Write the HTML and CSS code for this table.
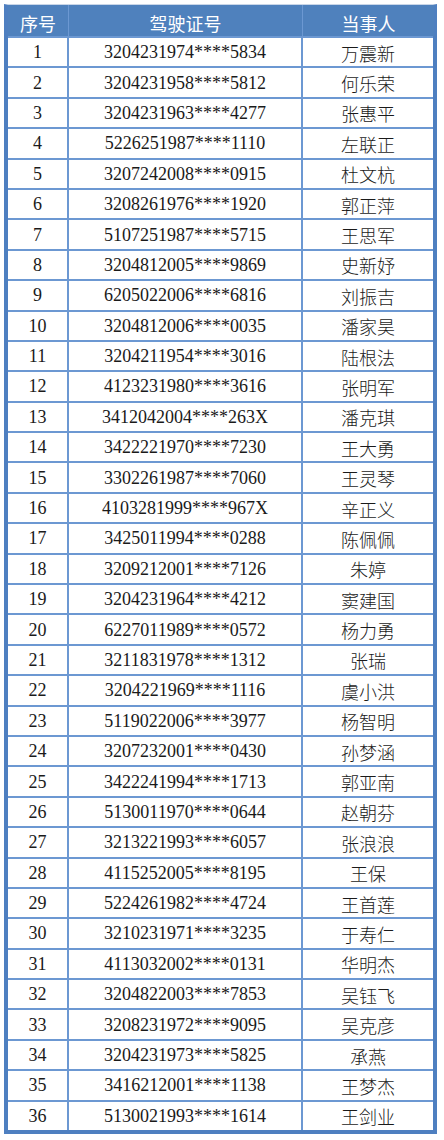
FILE: index.html
```html
<!DOCTYPE html>
<html lang="zh">
<head>
<meta charset="utf-8">
<link rel="stylesheet" href="styles.css">
</head>
<body>
<div class="frame">
<div class="grid" id="grid">
<div class="hd">序号</div><div class="hd">驾驶证号</div><div class="hd">当事人</div>
<div class="c num">1</div><div class="c num">3204231974****5834</div><div class="c name">万震新</div>
<div class="c num">2</div><div class="c num">3204231958****5812</div><div class="c name">何乐荣</div>
<div class="c num">3</div><div class="c num">3204231963****4277</div><div class="c name">张惠平</div>
<div class="c num">4</div><div class="c num">5226251987****1110</div><div class="c name">左联正</div>
<div class="c num">5</div><div class="c num">3207242008****0915</div><div class="c name">杜文杭</div>
<div class="c num">6</div><div class="c num">3208261976****1920</div><div class="c name">郭正萍</div>
<div class="c num">7</div><div class="c num">5107251987****5715</div><div class="c name">王思军</div>
<div class="c num">8</div><div class="c num">3204812005****9869</div><div class="c name">史新妤</div>
<div class="c num">9</div><div class="c num">6205022006****6816</div><div class="c name">刘振吉</div>
<div class="c num">10</div><div class="c num">3204812006****0035</div><div class="c name">潘家昊</div>
<div class="c num">11</div><div class="c num">3204211954****3016</div><div class="c name">陆根法</div>
<div class="c num">12</div><div class="c num">4123231980****3616</div><div class="c name">张明军</div>
<div class="c num">13</div><div class="c num">3412042004****263X</div><div class="c name">潘克琪</div>
<div class="c num">14</div><div class="c num">3422221970****7230</div><div class="c name">王大勇</div>
<div class="c num">15</div><div class="c num">3302261987****7060</div><div class="c name">王灵琴</div>
<div class="c num">16</div><div class="c num">4103281999****967X</div><div class="c name">辛正义</div>
<div class="c num">17</div><div class="c num">3425011994****0288</div><div class="c name">陈佩佩</div>
<div class="c num">18</div><div class="c num">3209212001****7126</div><div class="c name">朱婷</div>
<div class="c num">19</div><div class="c num">3204231964****4212</div><div class="c name">窦建国</div>
<div class="c num">20</div><div class="c num">6227011989****0572</div><div class="c name">杨力勇</div>
<div class="c num">21</div><div class="c num">3211831978****1312</div><div class="c name">张瑞</div>
<div class="c num">22</div><div class="c num">3204221969****1116</div><div class="c name">虞小洪</div>
<div class="c num">23</div><div class="c num">5119022006****3977</div><div class="c name">杨智明</div>
<div class="c num">24</div><div class="c num">3207232001****0430</div><div class="c name">孙梦涵</div>
<div class="c num">25</div><div class="c num">3422241994****1713</div><div class="c name">郭亚南</div>
<div class="c num">26</div><div class="c num">5130011970****0644</div><div class="c name">赵朝芬</div>
<div class="c num">27</div><div class="c num">3213221993****6057</div><div class="c name">张浪浪</div>
<div class="c num">28</div><div class="c num">4115252005****8195</div><div class="c name">王保</div>
<div class="c num">29</div><div class="c num">5224261982****4724</div><div class="c name">王首莲</div>
<div class="c num">30</div><div class="c num">3210231971****3235</div><div class="c name">于寿仁</div>
<div class="c num">31</div><div class="c num">4113032002****0131</div><div class="c name">华明杰</div>
<div class="c num">32</div><div class="c num">3204822003****7853</div><div class="c name">吴钰飞</div>
<div class="c num">33</div><div class="c num">3208231972****9095</div><div class="c name">吴克彦</div>
<div class="c num">34</div><div class="c num">3204231973****5825</div><div class="c name">承燕</div>
<div class="c num">35</div><div class="c num">3416212001****1138</div><div class="c name">王梦杰</div>
<div class="c num">36</div><div class="c num">5130021993****1614</div><div class="c name">王剑业</div>
</div>
</div>
</body>
</html>
```
FILE: styles.css
```css
html, body {
  margin: 0;
  padding: 0;
  background: #ffffff;
}
.frame {
  padding: 4px 0 0 4px;
}
.grid {
  display: grid;
  width: 425px;
  height: 1125px;
  grid-template-columns: 59px 232px 130px;
  grid-template-rows: 31px repeat(36, 1fr);
  gap: 2px;
  background: #6c98d2;
  border-top: 1px solid #c9d6e8;
  border-left: 4px solid #4e7fc0;
  border-right: 4px solid #4e7fc0;
  border-bottom: 4px solid #4e7fc0;
}
.hd {
  background: #4f81bd;
  color: #ffffff;
  font-family: "Noto Sans CJK SC", "Noto Sans", sans-serif;
  font-size: 18px;
  display: flex;
  align-items: center;
  justify-content: center;
  padding-top: 4px;
  margin-right: -1px;
}
.hd:last-child {
  margin-right: 0;
}
.c {
  background: #ffffff;
  color: #1a1a1a;
  font-size: 18px;
  display: flex;
  align-items: center;
  justify-content: center;
  padding-top: 1px;
}
.num {
  font-family: "Liberation Serif", "Noto Sans CJK SC", serif;
}
.name {
  font-family: "Noto Sans CJK SC", sans-serif;
  font-weight: 300;
}
```
